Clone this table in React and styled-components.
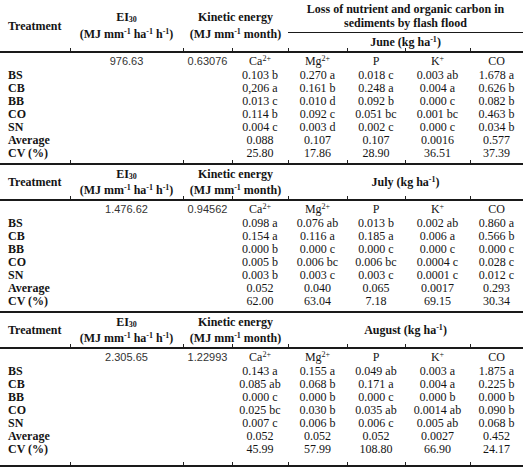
import React from "react";
import styled, { createGlobalStyle } from "styled-components";

// column widths of the source table, left to right
const COLS = [70, 113, 49, 56, 59, 58, 65, 53];

const sections = [
  {
    month: "June",
    ei: "976.63",
    ke: "0.63076",
    withLoss: true,
    rowH: 13,
    cvPad: 3,
    bottomTicks: true,
    rows: [
      ["BS", "0.103 b", "0.270 a", "0.018 c", "0.003 ab", "1.678 a"],
      ["CB", "0,206 a", "0.161 b", "0.248 a", "0.004 a", "0.626 b"],
      ["BB", "0.013 c", "0.010 d", "0.092 b", "0.000 c", "0.082 b"],
      ["CO", "0.114 b", "0.092 c", "0.051 bc", "0.001 bc", "0.463 b"],
      ["SN", "0.004 c", "0.003 d", "0.002 c", "0.000 c", "0.034 b"],
      ["Average", "0.088", "0.107", "0.107", "0.0016", "0.577"],
      ["CV (%)", "25.80", "17.86", "28.90", "36.51", "37.39"],
    ],
  },
  {
    month: "July",
    ei: "1.476.62",
    ke: "0.94562",
    rowH: 13,
    cvPad: 3,
    rows: [
      ["BS", "0.098 a", "0.076 ab", "0.013 b", "0.002 ab", "0.860 a"],
      ["CB", "0.154 a", "0.116 a", "0.185 a", "0.006 a", "0.566 b"],
      ["BB", "0.000 b", "0.000 c", "0.000 c", "0.000 c", "0.000 c"],
      ["CO", "0.005 b", "0.006 bc", "0.006 bc", "0.0004 c", "0.028 c"],
      ["SN", "0.003 b", "0.003 c", "0.003 c", "0.0001 c", "0.012 c"],
      ["Average", "0.052", "0.040", "0.065", "0.0017", "0.293"],
      ["CV (%)", "62.00", "63.04", "7.18", "69.15", "30.34"],
    ],
  },
  {
    month: "August",
    ei: "2.305.65",
    ke: "1.22993",
    rowH: 12,
    cvPad: 9,
    bottomTicks: true,
    rows: [
      ["BS", "0.143 a", "0.155 a", "0.049 ab", "0.003 a", "1.875 a"],
      ["CB", "0.085 ab", "0.068 b", "0.171 a", "0.004 a", "0.225 b"],
      ["BB", "0.000 c", "0.000 b", "0.000 c", "0.000 b", "0.000 b"],
      ["CO", "0.025 bc", "0.030 b", "0.035 ab", "0.0014 ab", "0.090 b"],
      ["SN", "0.007 c", "0.006 b", "0.006 c", "0.005 ab", "0.068 b"],
      ["Average", "0.052", "0.052", "0.052", "0.0027", "0.452"],
      ["CV (%)", "45.99", "57.99", "108.80", "66.90", "24.17"],
    ],
  },
];

// small vertical marks at column boundaries, sitting on a rule
const tickCss = (offsets) =>
  offsets && offsets.length
    ? `
    background-image: ${offsets.map(() => "linear-gradient(#222, #222)").join(", ")};
    background-size: 1px 3px;
    background-repeat: no-repeat;
    background-position: ${offsets.map((o) => `${o}px 100%`).join(", ")};
  `
    : "";

const spanTicks = (from, to) => {
  const out = [];
  let x = 0;
  for (let i = from; i < to; i++) {
    if (i > 0) out.push(x);
    x += COLS[i];
  }
  return out;
};

const GlobalStyle = createGlobalStyle`
  html, body {
    margin: 0;
    padding: 0;
    background: #fff;
  }
  body {
    font-family: "Liberation Serif", "Times New Roman", serif;
    color: #141414;
  }
`;

const Table = styled.table`
  width: 523px;
  table-layout: fixed;
  border-collapse: collapse;
  font-size: 12px;
  line-height: 13px;
`;

const HeadRow = styled.tr`
  height: ${(p) => p.$h}px;
`;

const HeadCell = styled.th`
  padding: 0 0 0 ${(p) => (p.$left ? 8 : 0)}px;
  font-weight: bold;
  text-align: ${(p) => (p.$left ? "left" : "center")};
  vertical-align: middle;
  line-height: ${(p) => p.$lh || 14}px;
  white-space: nowrap;
  border-bottom: ${(p) => p.$rule || 2}px solid #1a1a1a;
  ${(p) => tickCss(p.$ticks)}
`;

const ValueRow = styled.tr`
  height: ${(p) => p.$h}px;
`;

const Measure = styled.td`
  padding: 0;
  text-align: center;
  font-family: "Liberation Sans", Arial, sans-serif;
  font-size: 11px;
  color: #333;
`;

const Ion = styled.td`
  padding: 0;
  text-align: center;
`;

const DataRow = styled.tr`
  height: ${(p) => p.$h}px;
  ${(p) => (p.$last ? "border-bottom: 2px solid #1a1a1a;" : "")}
`;

const Label = styled.td`
  padding: 0 0 ${(p) => p.$pad || 0}px 8px;
  font-weight: bold;
  text-align: left;
  vertical-align: top;
  white-space: nowrap;
  ${(p) => tickCss(p.$ticks)}
`;

const Num = styled.td`
  padding: 0 0 ${(p) => p.$pad || 0}px 0;
  text-align: center;
  vertical-align: top;
  white-space: nowrap;
  ${(p) => tickCss(p.$ticks)}
`;

const Sup = styled.sup`
  font-size: 8px;
  line-height: 0;
  vertical-align: 4px;
`;

const Sub = styled.sub`
  font-size: 8px;
  line-height: 0;
  vertical-align: -1px;
`;

function Units() {
  return (
    <>
      (MJ mm<Sup>-1</Sup> ha<Sup>-1</Sup> h<Sup>-1</Sup>)
    </>
  );
}

function Section({ s }) {
  const headTicks = {
    ei: spanTicks(1, 2),
    ke: spanTicks(2, 4),
    month: spanTicks(4, 8),
  };
  const monthLabel = (
    <>
      {s.month} (kg ha<Sup>-1</Sup>)
    </>
  );

  return (
    <tbody>
      {s.withLoss ? (
        <>
          <HeadRow $h={32}>
            <HeadCell rowSpan={2} $left>
              Treatment
            </HeadCell>
            <HeadCell rowSpan={2} $lh={17} $ticks={headTicks.ei}>
              EI<Sub>30</Sub>
              <br />
              <Units />
            </HeadCell>
            <HeadCell rowSpan={2} colSpan={2} $lh={17} $ticks={headTicks.ke}>
              Kinetic energy
              <br />
              (MJ mm<Sup>-1</Sup> month)
            </HeadCell>
            <HeadCell colSpan={4} $rule={1}>
              Loss of nutrient and organic carbon in
              <br />
              sediments by flash flood
            </HeadCell>
          </HeadRow>
          <HeadRow $h={20}>
            <HeadCell colSpan={4} $ticks={headTicks.month}>
              {monthLabel}
            </HeadCell>
          </HeadRow>
        </>
      ) : (
        <HeadRow $h={36}>
          <HeadCell $left>Treatment</HeadCell>
          <HeadCell $lh={16} $ticks={headTicks.ei}>
            EI<Sub>30</Sub>
            <br />
            <Units />
          </HeadCell>
          <HeadCell colSpan={2} $lh={16} $ticks={headTicks.ke}>
            Kinetic energy
            <br />
            (MJ mm<Sup>-1</Sup> month)
          </HeadCell>
          <HeadCell colSpan={4} $ticks={headTicks.month}>
            {monthLabel}
          </HeadCell>
        </HeadRow>
      )}
      <ValueRow $h={17}>
        <Ion />
        <Measure>{s.ei}</Measure>
        <Measure>{s.ke}</Measure>
        <Ion>
          Ca<Sup>2+</Sup>
        </Ion>
        <Ion>
          Mg<Sup>2+</Sup>
        </Ion>
        <Ion>P</Ion>
        <Ion>
          K<Sup>+</Sup>
        </Ion>
        <Ion>CO</Ion>
      </ValueRow>
      {s.rows.map((r, i) => {
        const last = i === s.rows.length - 1;
        const pad = last ? s.cvPad : 0;
        const tick = last && s.bottomTicks ? [0] : null;
        return (
          <DataRow key={r[0]} $h={s.rowH + pad} $last={last}>
            <Label $pad={pad}>{r[0]}</Label>
            <Num $pad={pad} $ticks={tick} />
            <Num $pad={pad} $ticks={tick} />
            {r.slice(1).map((v, j) => (
              <Num key={j} $pad={pad} $ticks={tick}>
                {v}
              </Num>
            ))}
          </DataRow>
        );
      })}
    </tbody>
  );
}

export default function App() {
  return (
    <>
      <GlobalStyle />
      <Table>
        <colgroup>
          {COLS.map((w, i) => (
            <col key={i} style={{ width: w }} />
          ))}
        </colgroup>
        {sections.map((s) => (
          <Section key={s.month} s={s} />
        ))}
      </Table>
    </>
  );
}
